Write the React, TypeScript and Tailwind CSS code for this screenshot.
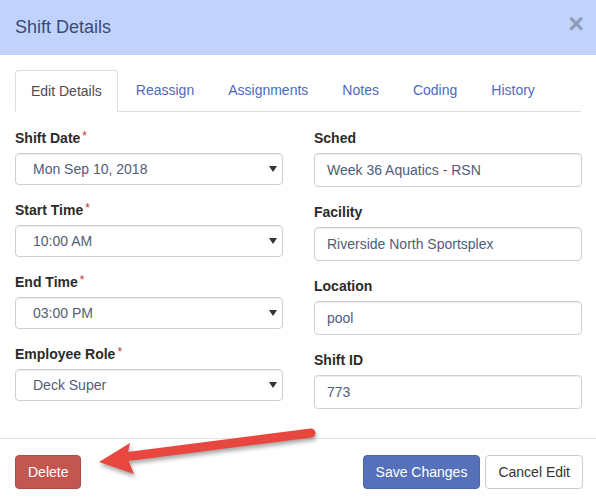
import React from "react";

const font = { fontFamily: '"Liberation Sans", Arial, sans-serif' };

function Caret() {
  return (
    <svg width="8" height="6" viewBox="0 0 8 6" className="shrink-0">
      <path d="M0 0 L8 0 L4 6 Z" fill="#333" />
    </svg>
  );
}

function SelectField({ label, value }: { label: string; value: string }) {
  return (
    <div className="mb-[15px]">
      <div className="flex h-[20px] items-center text-[14px] font-bold text-[#2b2b2b]">
        {label}
        <span className="ml-[2px] -mt-[4px] text-[12px] font-normal text-[#c9302c]">*</span>
      </div>
      <div className="mt-[5px] flex h-[32px] items-center justify-between rounded-[4px] border border-[#cfcfcf] bg-white pl-[17px] pr-[5px] text-[14px] text-[#525c78] shadow-[inset_0_1px_1px_rgba(0,0,0,0.075)]">
        <span>{value}</span>
        <Caret />
      </div>
    </div>
  );
}

function InputField({ label, value }: { label: string; value: string }) {
  return (
    <div className="mb-[15px]">
      <div className="flex h-[20px] items-center text-[14px] font-bold text-[#2b2b2b]">{label}</div>
      <div className="mt-[5px] flex h-[34px] items-center rounded-[4px] border border-[#cfcfcf] bg-white px-[12px] text-[14px] text-[#525c78] shadow-[inset_0_1px_1px_rgba(0,0,0,0.075)]">
        {value}
      </div>
    </div>
  );
}

export default function App() {
  const tabs = ["Edit Details", "Reassign", "Assignments", "Notes", "Coding", "History"];
  return (
    <div className="relative h-[500px] w-[596px] overflow-hidden bg-white" style={font}>
      <div className="flex h-[55px] items-center justify-between bg-[#c1d3fc] px-[15px]">
        <span className="text-[18px] text-[#3a4a78]">Shift Details</span>
        <span className="-mt-[6px] mr-[-3px] text-[27px] font-bold leading-none text-[#8e9bb8]">×</span>
      </div>
      <div className="px-[15px] pb-[14px] pt-[15px]">
        <div className="flex border-b border-[#dddddd]">
          {tabs.map((t, i) => (
            <div
              key={t}
              className={
                i === 0
                  ? "mr-[3px] -mb-px flex h-[42px] items-center rounded-t-[4px] border border-[#dddddd] border-b-white bg-white px-[15px] text-[14px] text-[#4d4d4d]"
                  : "mr-[4px] flex h-[41px] items-center px-[15px] text-[14px] text-[#4f69c0]"
              }
            >
              {t}
            </div>
          ))}
        </div>
        <div className="mt-[16px] grid grid-cols-2 gap-x-[30px]">
          <div>
            <SelectField label="Shift Date" value="Mon Sep 10, 2018" />
            <SelectField label="Start Time" value="10:00 AM" />
            <SelectField label="End Time" value="03:00 PM" />
            <SelectField label="Employee Role" value="Deck Super" />
          </div>
          <div className="-mr-[1px] ml-[1px]">
            <InputField label="Sched" value="Week 36 Aquatics - RSN" />
            <InputField label="Facility" value="Riverside North Sportsplex" />
            <InputField label="Location" value="pool" />
            <InputField label="Shift ID" value="773" />
          </div>
        </div>
      </div>
      <div className="flex items-center justify-between border-t border-[#e5e5e5] pl-[15px] pr-[13px] pt-[16px]">
        <div className="flex h-[34px] items-center rounded-[4px] border border-[#b04a45] bg-[#c25651] px-[12px] text-[14px] text-white">
          Delete
        </div>
        <div className="flex gap-[5px]">
          <div className="flex h-[34px] items-center rounded-[4px] border border-[#4a66ad] bg-[#5671b9] px-[12px] text-[14px] text-white">
            Save Changes
          </div>
          <div className="flex h-[34px] items-center rounded-[4px] border border-[#cccccc] bg-white px-[12px] text-[14px] text-[#333]">
            Cancel Edit
          </div>
        </div>
      </div>
      <svg
        className="pointer-events-none absolute left-0 top-0"
        width="596"
        height="500"
        viewBox="0 0 596 500"
        style={{ filter: "drop-shadow(1px 3px 2px rgba(0,0,0,0.35))" }}
      >
        <line x1="124" y1="457" x2="311" y2="433" stroke="#e8473f" strokeWidth="9" strokeLinecap="round" />
        <path d="M99 462 L130 443 L127 457 L134 474 Z" fill="#e8473f" />
      </svg>
    </div>
  );
}
